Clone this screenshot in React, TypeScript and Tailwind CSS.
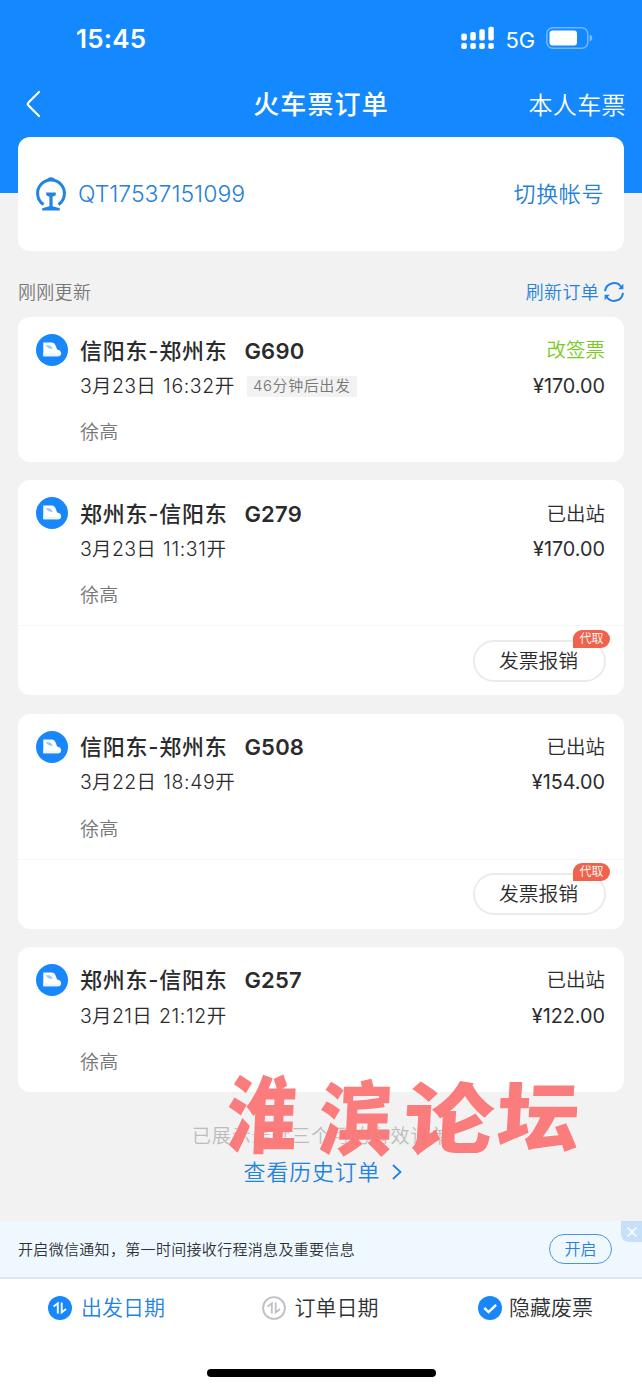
import React from 'react';

// ============================================
// DATA
// ============================================
interface Order {
  id: string;
  route: string;
  train: string;
  date: string;
  time: string;
  status: string;
  price: string;
  passenger: string;
  countdown?: string;
  changed?: boolean;
  invoice?: boolean;
}

const orders: Order[] = [
  { id: '1', route: '信阳东-郑州东', train: 'G690', date: '3月23日', time: '16:32开', status: '改签票', price: '¥170.00', passenger: '徐高', countdown: '46分钟后出发', changed: true },
  { id: '2', route: '郑州东-信阳东', train: 'G279', date: '3月23日', time: '11:31开', status: '已出站', price: '¥170.00', passenger: '徐高', invoice: true },
  { id: '3', route: '信阳东-郑州东', train: 'G508', date: '3月22日', time: '18:49开', status: '已出站', price: '¥154.00', passenger: '徐高', invoice: true },
  { id: '4', route: '郑州东-信阳东', train: 'G257', date: '3月21日', time: '21:12开', status: '已出站', price: '¥122.00', passenger: '徐高' },
];

// ============================================
// ICONS
// ============================================
const SignalIcon = () => (
  <svg className="w-[34px] h-[24px]" viewBox="0 0 34 24" fill="#fff">
    <rect x="1.3" y="7.5" width="5.5" height="7" rx="1.8" />
    <rect x="10.300" y="6" width="5.500" height="8.500" rx="1.800" />
    <rect x="19.300" y="3.300" width="5.500" height="11.200" rx="1.800" />
    <rect x="28.300" y="0.800" width="5.500" height="13.800" rx="1.800" />
    <rect x="1.300" y="17" width="5.500" height="6" rx="1.800" />
    <rect x="10.300" y="17" width="5.500" height="6" rx="1.800" />
    <rect x="19.300" y="17" width="5.500" height="6" rx="1.800" />
    <rect x="28.300" y="17" width="5.500" height="6" rx="1.800" />
  </svg>
);

const BatteryIcon = () => (
  <svg className="w-[47px] h-[22px]" viewBox="0 0 47 22" fill="none">
    <rect x="0.8" y="0.8" width="41" height="20.4" rx="6" stroke="#fff" strokeOpacity="0.4" strokeWidth="1.500" />
    <rect x="3.500" y="3.500" width="27.500" height="15" rx="3" fill="#fff" />
    <path d="M43.700 7.800c1.800.6 2.600 1.800 2.600 3.200s-.8 2.600-2.600 3.200z" fill="#fff" fillOpacity="0.45" />
  </svg>
);

const RailwayIcon = () => (
  <svg className="w-[32px] h-[34px]" viewBox="0 0 32 34" fill="none" stroke="#2383e0">
    <path d="M8.6 27.6A13.400 13.400 0 1 1 23.400 27.600" strokeWidth="3" />
    <path d="M11.800 3.600c.4-2.400 1.800-3.400 4.200-3.400s3.800 1 4.200 3.400z" fill="#2383e0" stroke="none" />
    <path d="M11.200 15.600h9.600v2.700l-3.200 1.400v9.600l7.200 1.900v2.200H7.200v-2.200l7.200-1.900v-9.600l-3.200-1.400z" fill="#2383e0" stroke="none" />
  </svg>
);

const RefreshIcon = () => (
  <svg className="w-[20px] h-[20px]" viewBox="0 0 20 20" fill="none" stroke="#2383e0" strokeWidth="2">
    <path d="M1 9.200A9 9 0 0 1 17.300 5" />
    <path d="M19 10.800A9 9 0 0 1 2.700 15" />
    <path d="M19.400 1.800v5.400h-5.200z" fill="#2383e0" stroke="none" />
    <path d="M.6 18.200v-5.400h5.200z" fill="#2383e0" stroke="none" />
  </svg>
);

const TrainIcon = () => (
  <svg className="w-[32px] h-[32px] shrink-0" viewBox="0 0 32 32">
    <circle cx="16" cy="16" r="16" fill="#1787fb" />
    <path d="M7.300 8.500h8.200c2.200 0 3.200 1 4.100 2.900l1.500 4c2.700.7 4 1.700 4 3.800 0 2-1.200 3.100-3.400 3.100H7.300z" fill="#fff" />
    <path d="M9.500 11.300h3.200c1.700 0 2.800 1 3.500 2.400l.6 1.400c-3.500-.3-5.700-1.400-7.300-3.800z" fill="#9ac8fc" />
    <path d="M7.300 18.600c4 1.300 9.500 1.500 17.600.9l-.5 1.700-2.300 1.100H7.300z" fill="#edf6ff" />
  </svg>
);

const SortIcon: React.FC<{ active?: boolean }> = ({ active }) => (
  <svg className="w-[24px] h-[24px]" viewBox="0 0 24 24" fill="none" strokeWidth="1.900">
    {active ? <circle cx="12" cy="12" r="12" fill="#1787fb" /> : <circle cx="12" cy="12" r="10.900" stroke="#c0c1c5" />}
    <path d="M5.600 10.500L9.800 7.300v10.200M13.700 6.500v9.900l4.300-3.400" stroke={active ? '#fff' : '#c0c1c5'} />
  </svg>
);

const CheckIcon = () => (
  <svg className="w-[24px] h-[24px]" viewBox="0 0 24 24" fill="none">
    <circle cx="12" cy="12" r="12" fill="#1787fb" />
    <path d="M6.300 12l4.300 4.100 7.500-7.300" stroke="#fff" strokeWidth="2.500" />
  </svg>
);

// ============================================
// HEADER
// ============================================
const Header = () => (
  <header className="h-[193px] bg-[#1488ff] text-white">
    <div className="flex h-[76px] items-center justify-between pl-[76px] pr-[49px]">
      <span className="pt-px text-[26px] font-semibold tracking-[0.200px]">15:45</span>
      <div className="flex items-center">
        <SignalIcon />
        <span className="mt-[3px] ml-[11px] mr-[11px] text-[22px] leading-6 font-normal tracking-[-0.100px]">5G</span>
        <BatteryIcon />
      </div>
    </div>
    <div className="grid h-[56px] grid-cols-3 items-center px-4">
      <svg className="ml-[9px] h-[28px] w-[16px]" viewBox="0 0 16 28" fill="none" stroke="#fff" strokeWidth="2.200" strokeLinecap="round">
        <path d="M14 2L3.500 12.500q-1.400 1.500 0 3L14 26" />
      </svg>
      <h1 className="text-center text-[26px] font-medium tracking-[1.100px] whitespace-nowrap">火车票订单</h1>
      <span className="pt-[3px] text-right text-[24px] font-[350] tracking-[0.400px] whitespace-nowrap">本人车票</span>
    </div>
  </header>
);

// ============================================
// ORDER CARD
// ============================================
const OrderCard: React.FC<{ order: Order }> = ({ order }) => (
  <article className="rounded-[12px] bg-white text-[#2b2b2d]">
    <div className="flex h-[145px] pt-4 pr-[19px] pl-[18px]">
      <div className="flex h-[34px] items-center">
        <TrainIcon />
      </div>
      <div className="ml-3 min-w-0 flex-1">
        <div className="flex h-[36px] items-center justify-between">
          <h2 className="flex text-[22px] font-medium">
            <span className="tracking-[0.750px]">{order.route}</span>
            <span className="ml-[17px] font-semibold tracking-[0.200px]">{order.train}</span>
          </h2>
          <span className={order.changed ? 'text-[19.500px] font-[350] text-[#79cb24]' : 'text-[19.500px] font-[350]'}>{order.status}</span>
        </div>
        <div className="flex h-[35px] items-center justify-between text-[19.500px] font-[350]">
          <div className="flex items-center">
            <span className="mr-[7px] tracking-[0.300px]">{order.date}</span>
            <span className="tracking-[0.600px]">{order.time}</span>
            {order.countdown && (
              <span className="ml-[12px] h-[21px] bg-[#f2f2f2] px-[6px] text-[15px] leading-[20px] font-[350] tracking-[0.600px] text-[#777]">
                {order.countdown}
              </span>
            )}
          </div>
          <span className="text-[19.800px] font-[380]">{order.price}</span>
        </div>
        <p className="mt-[12px] text-[19px] leading-[34px] font-[350] tracking-[0.300px] text-[#777]">{order.passenger}</p>
      </div>
    </div>
    {order.invoice && (
      <div className="flex h-[70px] items-center justify-end border-t border-[#f7f7f7] pr-[18px]">
        <button className="relative h-[42px] w-[133px] rounded-full border-2 border-[#ebebeb] pr-[2px] text-[19.800px] leading-[38px] font-[350]">
          发票报销
          <span className="absolute -top-[12px] -right-[6px] h-[18px] w-[37px] rounded-full rounded-bl-none bg-[#f0624b] text-[12px] leading-[18px] text-white">
            代取
          </span>
        </button>
      </div>
    )}
  </article>
);

// ============================================
// FOOTER
// ============================================
const NoticeBar = () => (
  <div className="relative flex h-[58px] items-center justify-between border-b-2 border-[#dfe7f1] bg-[#f0f8ff] pr-[30px] pl-[18px]">
    <p className="pt-[2px] text-[15px] font-[350] text-[#2f3235] tracking-[0.320px]">开启微信通知，第一时间接收行程消息及重要信息</p>
    <button className="h-[30px] w-[63px] rounded-full border border-[#4b94dd] text-[16px] leading-[28px] font-[350] text-[#2581d9]">开启</button>
    <span className="absolute top-0 right-0 flex h-[21px] w-[21px] items-center justify-center rounded-bl-[8px] bg-[#c7e0fa]">
      <svg className="h-[10px] w-[10px]" viewBox="0 0 10 10" stroke="#fff" strokeWidth="1.500">
        <path d="M.5.5l9 9M9.500.5l-9 9" />
      </svg>
    </span>
  </div>
);

const TabBar = () => (
  <nav className="h-[110px] bg-white text-[21px] font-[350] text-[#2f3235]">
    <div className="flex h-[58px] items-center justify-between pr-[49px] pl-[48px]">
      <div className="flex items-center gap-[9px] text-[#1f83e6]">
        <SortIcon active />
        <span>出发日期</span>
      </div>
      <div className="mr-[3px] flex items-center gap-[9px]">
        <SortIcon />
        <span>订单日期</span>
      </div>
      <div className="flex items-center gap-[7px]">
        <CheckIcon />
        <span>隐藏废票</span>
      </div>
    </div>
    <div className="mx-auto mt-[32px] h-[8px] w-[229px] rounded-full bg-black" />
  </nav>
);

// Forum stamp laid over the end of the list
const Watermark = () => (
  <div className="pointer-events-none absolute top-[1071px] left-[227px] flex text-[#fb7676] opacity-95 font-black leading-[90px] [text-shadow:0_0_2px_#fff]">
    <span className="w-[92px] origin-left -skew-x-3 scale-y-120 text-[70px]">淮</span>
    <span className="w-[85px] origin-left -skew-x-3 scale-y-110 pt-[3px] text-[74px]">滨</span>
    <span className="w-[93px] origin-left -skew-x-3 scale-x-115 pt-[4px] text-[78px]">论</span>
    <span className="w-[86px] origin-left -skew-x-3 scale-x-110 pt-[2px] text-[75px]">坛</span>
  </div>
);

export default function App() {
  return (
    <div className="relative h-[1389px] w-[642px] overflow-hidden bg-[#f2f2f2] font-['Inter','Noto_Sans_CJK_SC',sans-serif]">
      <Header />

      <main className="-mt-[56px] h-[1084px] px-[18px]">
        <section className="flex h-[114px] items-center justify-between rounded-[12px] bg-white pr-[20px] pl-[17px] text-[#2581d9]">
          <div className="flex items-center gap-[11px]">
            <RailwayIcon />
            <span className="text-[23px] font-[350] tracking-[0px]">QT17537151099</span>
          </div>
          <span className="text-[22px] font-[350] tracking-[0.600px]">切换帐号</span>
        </section>

        <div className="flex h-[66px] items-center justify-between pt-4 text-[18px] font-[350] tracking-[0.300px]">
          <span className="text-[#777]">刚刚更新</span>
          <span className="flex items-center gap-[5px] text-[#2581d9]">
            刷新订单
            <RefreshIcon />
          </span>
        </div>

        <div className="flex flex-col gap-[18.300px]">
          {orders.map((order) => (
            <OrderCard key={order.id} order={order} />
          ))}
        </div>

        <div className="mt-[27px] text-center">
          <p className="text-[19px] leading-[36px] font-[350] tracking-[0.850px] text-[#bcbcbc]">已展示最近三个月的有效订单</p>
          <p className="flex items-center justify-center gap-[12px] pl-[4px] text-[22px] leading-[34px] font-[350] tracking-[0.800px] text-[#1f83e0]">
            查看历史订单
            <svg className="h-[16px] w-[10px]" viewBox="0 0 10 16" fill="none" stroke="#1f83e0" strokeWidth="1.800">
              <path d="M1 1l7.500 7L1 15" />
            </svg>
          </p>
        </div>
      </main>

      <NoticeBar />
      <TabBar />
      <Watermark />
    </div>
  );
}
